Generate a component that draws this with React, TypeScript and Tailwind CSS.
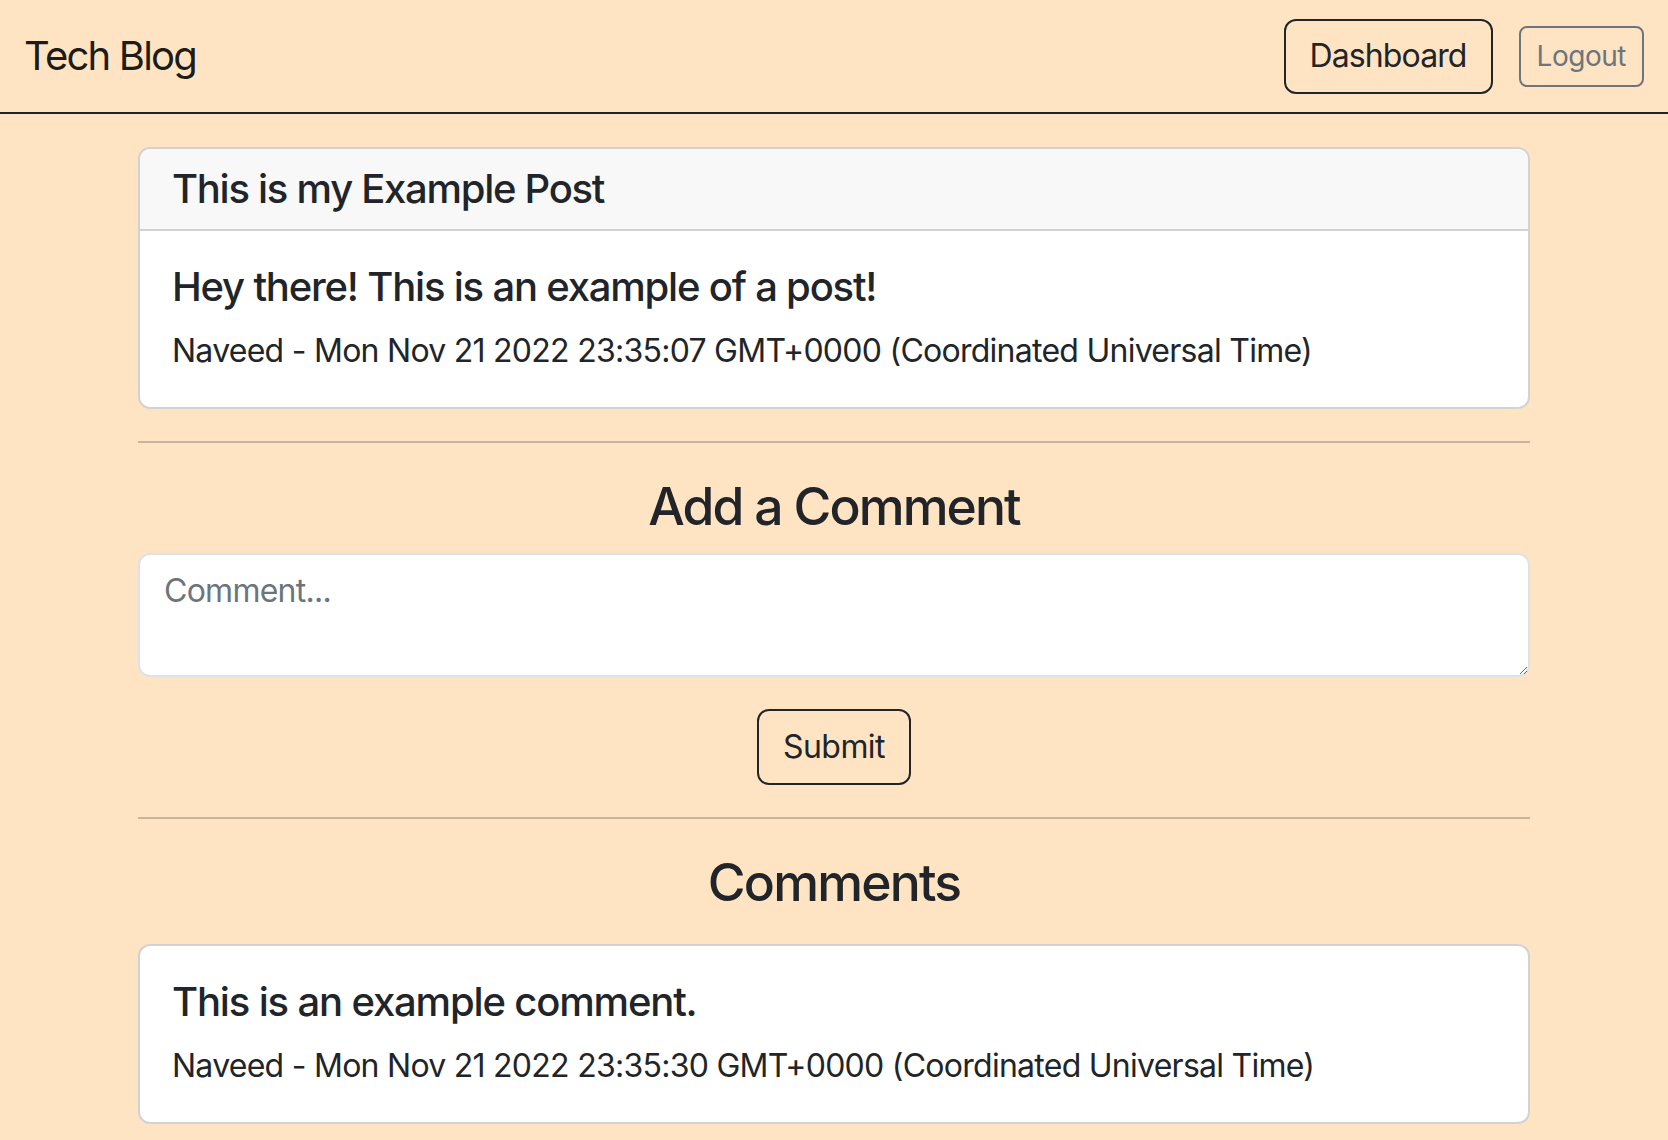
import React from "react"

const post = {
    title: "This is my Example Post",
    body: "Hey there! This is an example of a post!",
    author: "Naveed",
    date: "Mon Nov 21 2022 23:35:07 GMT+0000 (Coordinated Universal Time)",
}

const comments = [
    {
        text: "This is an example comment.",
        author: "Naveed",
        date: "Mon Nov 21 2022 23:35:30 GMT+0000 (Coordinated Universal Time)",
    },
]

const Navbar = () => {
    return (
        <nav className="h-[114px] border-b-2 border-[#212529] flex items-center justify-between px-[24px]">
            <a href="#" className="text-[40px] leading-[60px] tracking-[-0.045em] text-black/90">
                Tech Blog
            </a>
            <div className="flex items-center gap-[26px]">
                <button className="h-[75px] px-[24px] border-2 border-[#212529] rounded-[12px] text-[32px] leading-[48px] tracking-[-0.028em] text-[#212529]">
                    Dashboard
                </button>
                <button className="h-[61px] px-[16px] border-2 border-[#6c757d] rounded-[8px] text-[28px] leading-[42px] tracking-[-0.017em] text-[#6c757d]">
                    Logout
                </button>
            </div>
        </nav>
    )
}

const Divider = () => <hr className="mt-[32px] border-0 border-t-2 border-[#c9b59e]" />

export default function App() {
    return (
        <div
            className="min-h-screen bg-[#ffe4c4] text-[#212529]"
            style={{ fontFamily: "Inter, 'Noto Sans', sans-serif" }}
        >
            <Navbar />

            <main className="w-[1392px] mx-auto pt-[33px] pb-[18px]">
                <div className="bg-white border-2 border-[#d2d2d2] rounded-[12px] overflow-hidden">
                    <div className="bg-[#f8f8f8] border-b-2 border-[#d2d2d2] px-[32px] py-[16px]">
                        <h5 className="text-[40px] leading-[48px] tracking-[-0.032em] font-medium">{post.title}</h5>
                    </div>
                    <div className="p-[32px]">
                        <h5 className="text-[40px] leading-[48px] tracking-[-0.03em] font-medium mb-[16px]">{post.body}</h5>
                        <p className="text-[32px] leading-[48px] tracking-[-0.023em]">
                            {post.author} - {post.date}
                        </p>
                    </div>
                </div>

                <Divider />

                <h3 className="mt-[32px] mb-[16px] text-center text-[51.6px] leading-[62px] tracking-[-0.037em] font-medium">
                    Add a Comment
                </h3>
                <form className="flex flex-col items-center" onSubmit={(e) => e.preventDefault()}>
                    <textarea
                        rows={2}
                        placeholder="Comment..."
                        className="w-full h-[124px] bg-white border-2 border-[#dee2e6] rounded-[12px] px-[24px] py-[12px] text-[32px] leading-[48px] tracking-[-0.023em] placeholder:text-[#6c757d] outline-none"
                    />
                    <button
                        type="submit"
                        className="mt-[32px] h-[76px] px-[24px] border-2 border-[#212529] rounded-[12px] text-[32px] leading-[48px] tracking-[-0.017em]"
                    >
                        Submit
                    </button>
                </form>

                <Divider />

                <h3 className="mt-[32px] mb-[31px] text-center text-[51.6px] leading-[62px] tracking-[-0.035em] font-medium">
                    Comments
                </h3>
                {comments.map((c, i) => (
                    <div key={i} className="bg-white border-2 border-[#d2d2d2] rounded-[12px] p-[32px]">
                        <h5 className="text-[40px] leading-[48px] tracking-[-0.029em] font-medium mb-[16px]">{c.text}</h5>
                        <p className="text-[32px] leading-[48px] tracking-[-0.023em]">
                            {c.author} - {c.date}
                        </p>
                    </div>
                ))}
            </main>
        </div>
    )
}
